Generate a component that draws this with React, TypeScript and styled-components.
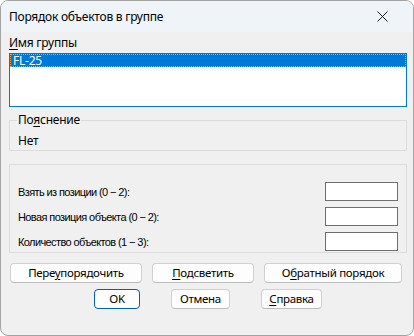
import React from "react";
import styled, { createGlobalStyle } from "styled-components";

const Global = createGlobalStyle`
  html, body { margin: 0; padding: 0; background: #ffffff; }
  body { width: 414px; height: 336px; overflow: hidden; }
  * { box-sizing: border-box; }
`;

const UI_FONT = `"Segoe UI", "Noto Sans", sans-serif`;
const CLASSIC_FONT = `"Liberation Sans", Arial, sans-serif`;

const Window = styled.div`
  width: 414px;
  height: 336px;
  border: 1px solid #a3a3a3;
  border-radius: 8px;
  overflow: hidden;
  background: #f0f0f0;
  display: flex;
  flex-direction: column;
  font-family: ${UI_FONT};
  letter-spacing: -0.25px;
  color: #000;
`;

const TitleBar = styled.div`
  height: 31px;
  flex: none;
  background: #eff4f9;
  display: flex;
  align-items: center;
  justify-content: space-between;
  padding: 0 0 0 8px;
`;

const Title = styled.span`
  font-size: 12px;
  line-height: 16px;
  padding-top: 1px;
`;

const CloseBox = styled.div`
  width: 46px;
  height: 31px;
  display: flex;
  align-items: center;
  justify-content: center;
  margin-right: 8px;
`;

const Body = styled.div`
  flex: 1;
  display: flex;
  flex-direction: column;
  padding: 4px 6px 0 8px;
`;

const FieldLabel = styled.div`
  font-size: 12px;
  line-height: 14px;
  height: 14px;
  margin-bottom: 3px;
`;

const Mn = styled.span`
  text-decoration: underline;
  text-underline-offset: 2px;
`;

const ListBox = styled.div`
  height: 54px;
  border: 1px solid #0078d7;
  background: #ffffff;
`;

const ListItem = styled.div<{ $selected?: boolean }>`
  height: 13px;
  line-height: 11px;
  font-size: 12px;
  padding-left: 2px;
  color: ${(p) => (p.$selected ? "#ffffff" : "#000")};
  background: ${(p) => (p.$selected ? "#0078d7" : "transparent")};
  border: 1px dotted ${(p) => (p.$selected ? "#f7a24a" : "transparent")};
`;

const Group = styled.fieldset`
  margin: 6px 0 0 0;
  padding: 7px 8px 2px 8px;
  border: 1px solid #dcdcdc;
  min-width: 0;
`;

const Legend = styled.legend`
  font-size: 12px;
  line-height: 14px;
  padding: 0 1px;
  margin-left: -1px;
`;

const Note = styled.div`
  font-size: 12px;
  line-height: 14px;
`;

const ParamsBox = styled.div`
  margin-top: 13px;
  border: 1px solid #dcdcdc;
  padding: 17px 8px 1px 8px;
  display: flex;
  flex-direction: column;
  gap: 6px;
`;

const ParamRow = styled.div`
  display: flex;
  align-items: center;
  justify-content: space-between;
  height: 19px;
`;

const ParamLabel = styled.span`
  font-family: ${CLASSIC_FONT};
  font-size: 11px;
  letter-spacing: -0.6px;
`;

const Input = styled.div`
  width: 73px;
  height: 19px;
  border: 1px solid #6e6e6e;
  background: #ffffff;
`;

const ButtonRow = styled.div<{ $center?: boolean; $gap: number; $top: number }>`
  display: flex;
  justify-content: ${(p) => (p.$center ? "center" : "flex-start")};
  gap: ${(p) => p.$gap}px;
  margin-top: ${(p) => p.$top}px;
  padding-left: ${(p) => (p.$center ? 0 : 1)}px;
`;

const Button = styled.div<{ $w: number; $default?: boolean }>`
  width: ${(p) => p.$w}px;
  height: 20px;
  border: 1px solid ${(p) => (p.$default ? "#005fb8" : "#d0d0d0")};
  border-bottom-color: ${(p) => (p.$default ? "#005fb8" : "#bdbdbd")};
  border-radius: 4px;
  background: #fdfdfd;
  font-size: 11.5px;
  letter-spacing: -0.3px;
  line-height: 18px;
  text-align: center;
  white-space: nowrap;
`;

export default function App() {
  return (
    <>
      <Global />
      <Window>
        <TitleBar>
          <Title>Порядок объектов в группе</Title>
          <CloseBox>
            <svg width="11" height="11" viewBox="0 0 11 11">
              <path d="M0.5 0.5 L10.5 10.5 M10.5 0.5 L0.5 10.5" stroke="#1b1b1b" strokeWidth="1" fill="none" />
            </svg>
          </CloseBox>
        </TitleBar>
        <Body>
          <FieldLabel>
            <Mn>И</Mn>мя группы
          </FieldLabel>
          <ListBox>
            <ListItem $selected>FL-25</ListItem>
          </ListBox>
          <Group>
            <Legend>
              По<Mn>я</Mn>снение
            </Legend>
            <Note>Нет</Note>
          </Group>
          <ParamsBox>
            <ParamRow>
              <ParamLabel>Взять из позиции (0 − 2):</ParamLabel>
              <Input />
            </ParamRow>
            <ParamRow>
              <ParamLabel>Новая позиция объекта (0 − 2):</ParamLabel>
              <Input />
            </ParamRow>
            <ParamRow>
              <ParamLabel>Количество объектов (1 − 3):</ParamLabel>
              <Input />
            </ParamRow>
          </ParamsBox>
          <ButtonRow $gap={10} $top={10}>
            <Button $w={132}>
              Пере<Mn>у</Mn>порядочить
            </Button>
            <Button $w={102}>
              <Mn>П</Mn>одсветить
            </Button>
            <Button $w={138}>
              О<Mn>б</Mn>ратный порядок
            </Button>
          </ButtonRow>
          <ButtonRow $center $gap={31} $top={6}>
            <Button $w={46} $default>
              OK
            </Button>
            <Button $w={59}>Отмена</Button>
            <Button $w={61}>
              <Mn>С</Mn>правка
            </Button>
          </ButtonRow>
        </Body>
      </Window>
    </>
  );
}
